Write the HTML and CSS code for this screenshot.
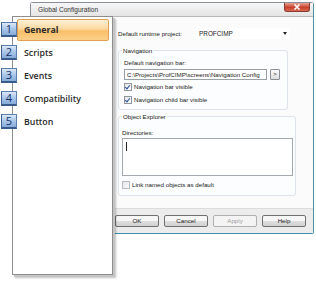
FILE: index.html
```html
<!DOCTYPE html>
<html>
<head>
  <link rel="stylesheet" href="styles.css">
</head>
<body>
  <div class="dialog">
    <div class="titlebar">
      <span class="title">Global Configuration</span>
      <span class="close">
        <svg width="10" height="6" viewBox="0 0 10 6"><path d="M2.5 0.5 L7.5 5.5 M7.5 0.5 L2.5 5.5" stroke="#fff" stroke-width="1.6"/></svg>
      </span>
    </div>
    <div class="body">
      <div class="content">
        <div class="project">
          <span class="lbl">Default runtime project:</span>
          <div class="combo"><span>PROFCIMP</span><span class="arrow"></span></div>
        </div>

        <div class="group nav">
          <span class="legend">Navigation</span>
          <div class="lbl">Default navigation bar:</div>
          <div class="pathrow">
            <div class="field">C:\Projects\ProfCIMP\screens\Navigation Config</div>
            <div class="more">&gt;</div>
          </div>
          <div class="check"><span class="box on"></span>Navigation bar visible</div>
          <div class="check"><span class="box on"></span>Navigation child bar visible</div>
        </div>

        <div class="group explorer">
          <span class="legend">Object Explorer</span>
          <div class="lbl">Directories:</div>
          <div class="area"><span class="caret"></span></div>
          <div class="check dim"><span class="box"></span>Link named objects as default</div>
        </div>
      </div>
      <div class="buttons">
        <div class="btn">OK</div>
        <div class="btn">Cancel</div>
        <div class="btn off">Apply</div>
        <div class="btn">Help</div>
      </div>
    </div>
  </div>

  <div class="panel">
    <div class="item active"><span class="num">1</span><span class="name">General</span></div>
    <div class="item"><span class="num">2</span><span class="name">Scripts</span></div>
    <div class="item"><span class="num">3</span><span class="name">Events</span></div>
    <div class="item"><span class="num">4</span><span class="name">Compatibility</span></div>
    <div class="item"><span class="num">5</span><span class="name">Button</span></div>
  </div>
</body>
</html>
```

FILE: styles.css
```css
html {
  height: 100%;
}

body {
  margin: 0;
  width: 316px;
  height: 281px;
  overflow: hidden;
  position: relative;
  background: #fff;
  font-family: "Liberation Sans", Arial, sans-serif;
  font-size: 6.2px;
  color: #222;
}

/* dialog window */
.dialog {
  margin: 2px 0 0 30px;
  width: 282px;
  height: 230px;
  border: 1px solid #8a9099;
  border-right-color: #4f8ea8;
  border-bottom-color: #3f8fb4;
  border-radius: 3px 3px 2px 2px;
  display: flex;
  flex-direction: column;
  background: #f2f2f2;
}

.titlebar {
  height: 13px;
  display: flex;
  align-items: center;
  justify-content: space-between;
  background: linear-gradient(to bottom, #f7f7f7, #e4e4e4);
  border-bottom: 1px solid #b8b8b8;
}

.title {
  padding-left: 7px;
  font-size: 6.6px;
  color: #333;
}

.close {
  align-self: flex-start;
  width: 24px;
  height: 8px;
  margin-right: 3px;
  display: flex;
  align-items: center;
  justify-content: center;
  border: 1px solid #8a3a30;
  border-top: none;
  border-radius: 0 0 3px 3px;
  background: linear-gradient(to bottom, #e8a090, #c8402c 55%, #d86a50);
}

.body {
  flex: 1;
  display: flex;
  flex-direction: column;
}

.content {
  flex: 1;
  background: #fbfbfb;
  padding: 10px 0 0 87px;
  border-bottom: 1px solid #dcdcdc;
}

.project {
  display: flex;
  align-items: center;
  height: 12px;
}

.project .lbl {
  width: 78px;
}

.combo {
  width: 91px;
  height: 11px;
  padding-left: 3px;
  display: flex;
  align-items: center;
  justify-content: space-between;
  background: #fff;
  font-size: 6.4px;
}

.arrow {
  width: 0;
  height: 0;
  margin-right: 3px;
  border-left: 2.5px solid transparent;
  border-right: 2.5px solid transparent;
  border-top: 3px solid #222;
}

/* group boxes */
.group {
  position: relative;
  border: 1px solid #dde3ea;
  border-radius: 3px;
  background: #fcfdfe;
}

.legend {
  position: absolute;
  top: -4px;
  left: 3px;
  padding: 0 1px;
  background: #fbfbfb;
}

.nav {
  margin-top: 11px;
  width: 170px;
  height: 60px;
  padding: 8px 0 0 5px;
  box-sizing: border-box;
}

.pathrow {
  display: flex;
  align-items: center;
  margin-top: 3px;
}

.field {
  width: 143px;
  height: 11px;
  padding-left: 2px;
  box-sizing: border-box;
  border: 1px solid #9aa0a8;
  background: #fff;
  white-space: nowrap;
  overflow: hidden;
  line-height: 10px;
}

.more {
  margin-left: 3px;
  width: 8px;
  height: 9px;
  border: 1px solid #8a8f96;
  border-radius: 1px;
  background: linear-gradient(to bottom, #fafafa, #dedede);
  font-size: 6px;
  line-height: 9px;
  text-align: center;
}

.check {
  display: flex;
  align-items: center;
  height: 13px;
}

.nav .check:first-of-type {
  margin-top: 1px;
}

.box {
  width: 6px;
  height: 6px;
  margin-right: 2px;
  border: 1px solid #8f969e;
  background: linear-gradient(135deg, #e4e6e8, #fafafa);
  position: relative;
}

.box.on::after {
  content: "";
  position: absolute;
  left: 1px;
  top: 0;
  width: 2px;
  height: 4px;
  border-right: 1.3px solid #2a4f9a;
  border-bottom: 1.3px solid #2a4f9a;
  transform: rotate(40deg);
}

.explorer {
  margin-top: 6px;
  width: 178px;
  height: 80px;
  padding: 12px 0 0 3px;
  box-sizing: border-box;
}

.area {
  margin-top: 2px;
  width: 171px;
  height: 38px;
  box-sizing: border-box;
  border: 1px solid #a4a9b0;
  background: #fff;
  padding: 3px 0 0 3px;
}

.caret {
  display: block;
  width: 1px;
  height: 9px;
  background: #222;
}

.explorer .check {
  margin-top: 2px;
}

.dim .box {
  border-color: #b8bcc0;
}

/* bottom buttons */
.buttons {
  height: 24px;
  display: flex;
  align-items: center;
  gap: 5px;
  padding-left: 84px;
  background: #ececec;
}

.btn {
  width: 42px;
  height: 10px;
  border: 1px solid #707070;
  border-radius: 2px;
  background: linear-gradient(to bottom, #f6f6f6 45%, #dddddd 55%, #d2d2d2);
  text-align: center;
  line-height: 10px;
  font-size: 6.2px;
}

.btn.off {
  border-color: #b0b0b0;
  color: #a0a0a0;
  background: #f4f4f4;
}

/* overlay list of pages */
.panel {
  position: absolute;
  left: 12px;
  top: 16px;
  width: 101px;
  height: 259px;
  border: 1px solid #8e8e8e;
  background: #fff;
  box-shadow: 2px 2px 0 #c4c4c4, 3px 3px 2px rgba(0, 0, 0, .25);
  padding-top: 1px;
  box-sizing: border-box;
  font-family: "Open Sans", "Liberation Sans", sans-serif;
}

.item {
  display: flex;
  align-items: center;
  height: 23px;
  margin-left: -12px;
}

.num {
  width: 16px;
  height: 15px;
  box-sizing: border-box;
  border: 1px solid #5a7fae;
  border-left-color: #3c5f90;
  border-bottom: 2px solid #3a5c8c;
  background: linear-gradient(to bottom, #dbe8f6, #a9c6e8 50%, #86aad8);
  color: #15306a;
  font-size: 11px;
  line-height: 12px;
  text-align: center;
}

.name {
  margin-right: 3px;
  flex: 1;
  height: 20px;
  line-height: 20px;
  padding-left: 6px;
  font-size: 8.8px;
  font-weight: 600;
  color: #2a2a2a;
  border: 1px solid transparent;
}

.active .name {
  font-weight: 700;
  border-color: #e0a050;
  border-radius: 2px;
  background: linear-gradient(to bottom, #fff1d8, #fdd9a0 45%, #f9bf68 55%, #fbd08a);
}
```
